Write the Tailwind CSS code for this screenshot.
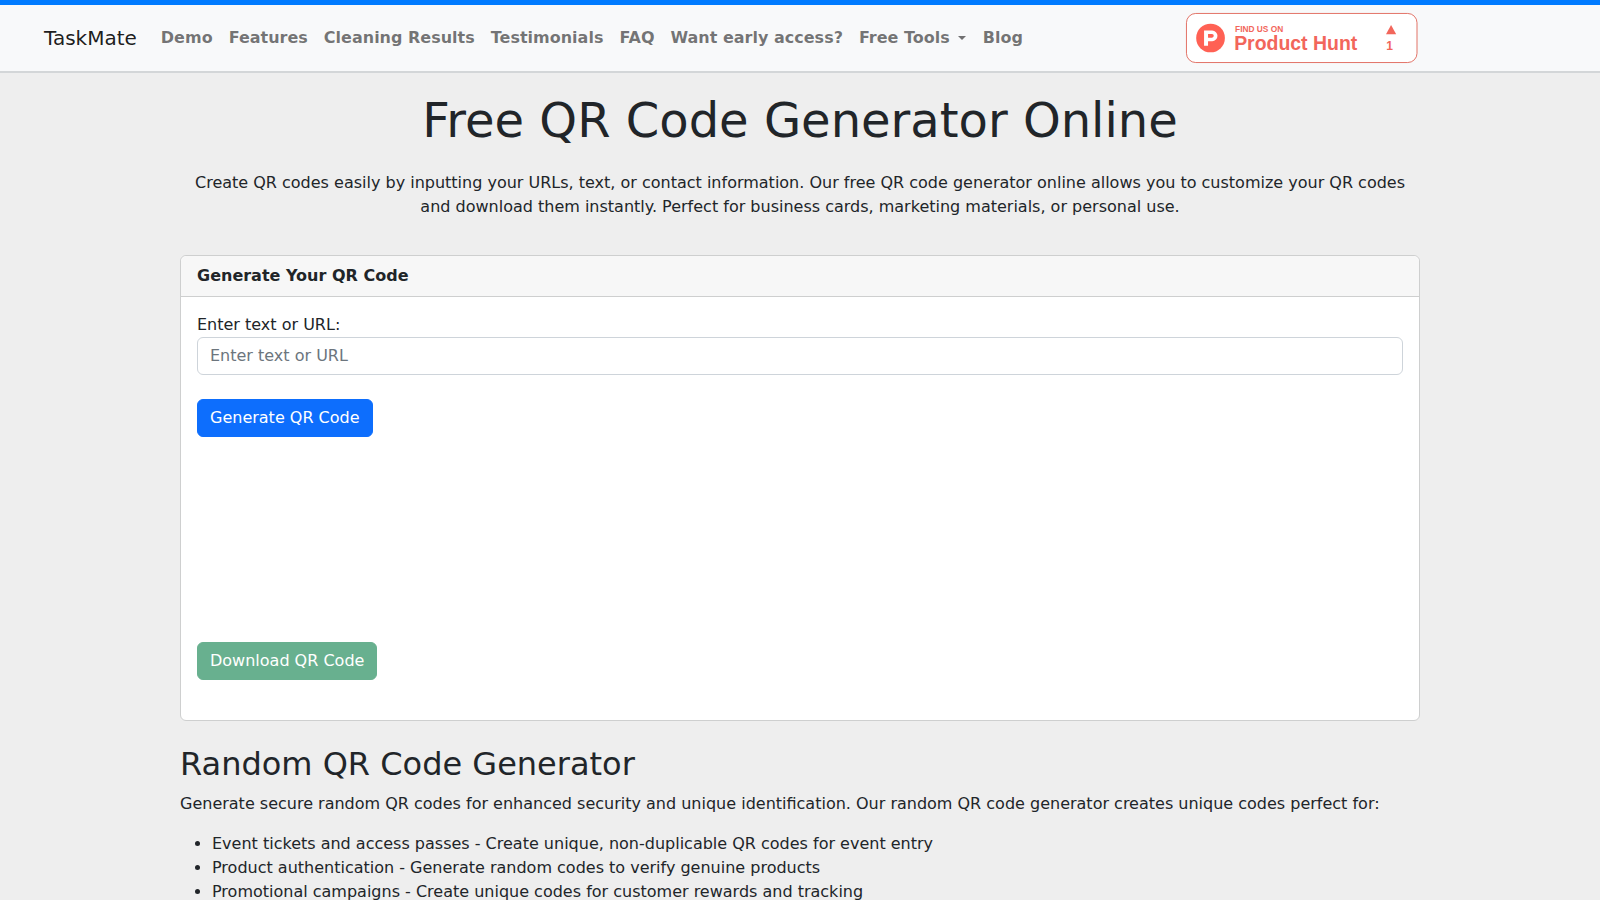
<!DOCTYPE html>
<html lang="en">
<head>
    <meta charset="UTF-8">
    <meta name="viewport" content="width=device-width, initial-scale=1.0">
    <title>Free QR Code Generator Online - TaskMate</title>
    <script src="https://cdn.jsdelivr.net/npm/@tailwindcss/browser@4"></script>
</head>
<body class="bg-[#eeeeee] text-[#212529] font-['DejaVu_Sans',sans-serif] text-base overflow-x-hidden">
    <!-- Navbar -->
    <header class="border-t-5 border-t-[#007bff] border-b-2 border-b-[#d3d6d8] bg-[#f8f9fa]">
        <nav class="flex items-center py-2 pl-11 pr-[183px]">
            <a href="#" class="text-xl leading-[30px] text-black/90 mr-4">TaskMate</a>
            <ul class="flex grow items-center font-bold text-black/55 whitespace-nowrap">
                <li><a href="#demo" class="block p-2">Demo</a></li>
                <li><a href="#features" class="block p-2">Features</a></li>
                <li><a href="#results" class="block p-2">Cleaning Results</a></li>
                <li><a href="#testimonials" class="block p-2">Testimonials</a></li>
                <li><a href="#faq" class="block p-2">FAQ</a></li>
                <li><a href="#early-access" class="block p-2">Want early access?</a></li>
                <li>
                    <a href="#tools" class="flex items-center gap-2 p-2">Free Tools
                        <span class="border-x-4 border-t-4 border-x-transparent border-t-current mr-px"></span>
                    </a>
                </li>
                <li><a href="#blog" class="block p-2">Blog</a></li>
            </ul>
            <a href="#producthunt" aria-label="Find us on Product Hunt" class="shrink-0">
                <svg class="block h-[50px] w-auto overflow-visible" viewBox="0 0 250 54" fill="none">
                    <rect x="0.5" y="0.5" width="249" height="53" rx="10" fill="#fff" stroke="#e0695c"/>
                    <circle cx="26.5" cy="27" r="15.5" fill="#ff6154"/>
                    <path fill="#fff" fill-rule="evenodd" d="M19.500 19h8.800a5.700 5.700 0 0 1 0 11.400H23.800v5.100H19.500zM23.800 22.800v3.800h4.300a1.900 1.900 0 0 0 0-3.800z"/>
                    <g fill="#f2665b" font-family="'Liberation Sans', Arial, sans-serif" font-weight="bold">
                        <text x="53" y="20" font-size="9">FIND US ON</text>
                        <text x="52" y="40" font-size="21">Product Hunt</text>
                        <text x="220" y="40" font-size="13" text-anchor="middle">1</text>
                        <path d="M221.500 13l5.500 10h-11z"/>
                    </g>
                </svg>
            </a>
        </nav>
    </header>

    <main class="max-w-[1240px] mx-auto">
        <!-- Intro -->
        <section class="text-center pt-[18px]">
            <h1 class="text-5xl leading-[58px] mb-[22px]">Free QR Code Generator Online</h1>
            <p class="leading-6 mb-9">Create QR codes easily by inputting your URLs, text, or contact information. Our free QR code generator online allows you to customize your QR codes and download them instantly. Perfect for business cards, marketing materials, or personal use.</p>
        </section>

        <!-- Generator -->
        <section class="bg-white border border-[#cecfcf] rounded-md mb-6">
            <h2 class="bg-[#f7f7f7] border-b border-[#cecfcf] rounded-t-md px-4 py-2 font-bold leading-6">Generate Your QR Code</h2>
            <form class="p-4 pb-10">
                <label for="qrText" class="block leading-6">Enter text or URL:</label>
                <input type="text" id="qrText" name="qrText" placeholder="Enter text or URL" class="block w-full mb-6 px-3 py-1.5 leading-6 bg-white border border-[#ced4da] rounded-md placeholder:text-[#6c757d]">
                <button type="button" id="generate" class="block px-3 py-1.5 leading-6 bg-[#0d6efd] border border-[#0d6efd] text-white rounded-md">Generate QR Code</button>
                <div id="qrcode" class="h-[205px]"></div>
                <button type="button" id="download" class="block px-3 py-1.5 leading-6 bg-[#198754] border border-[#198754] text-white rounded-md opacity-65" disabled>Download QR Code</button>
            </form>
        </section>

        <!-- Random codes -->
        <section>
            <h2 class="text-[32px] leading-[39px] mb-2">Random QR Code Generator</h2>
            <p class="leading-6 mb-4">Generate secure random QR codes for enhanced security and unique identification. Our random QR code generator creates unique codes perfect for:</p>
            <ul class="list-disc pl-8 leading-6">
                <li>Event tickets and access passes - Create unique, non-duplicable QR codes for event entry</li>
                <li>Product authentication - Generate random codes to verify genuine products</li>
                <li>Promotional campaigns - Create unique codes for customer rewards and tracking</li>
            </ul>
        </section>
    </main>
</body>
</html>
